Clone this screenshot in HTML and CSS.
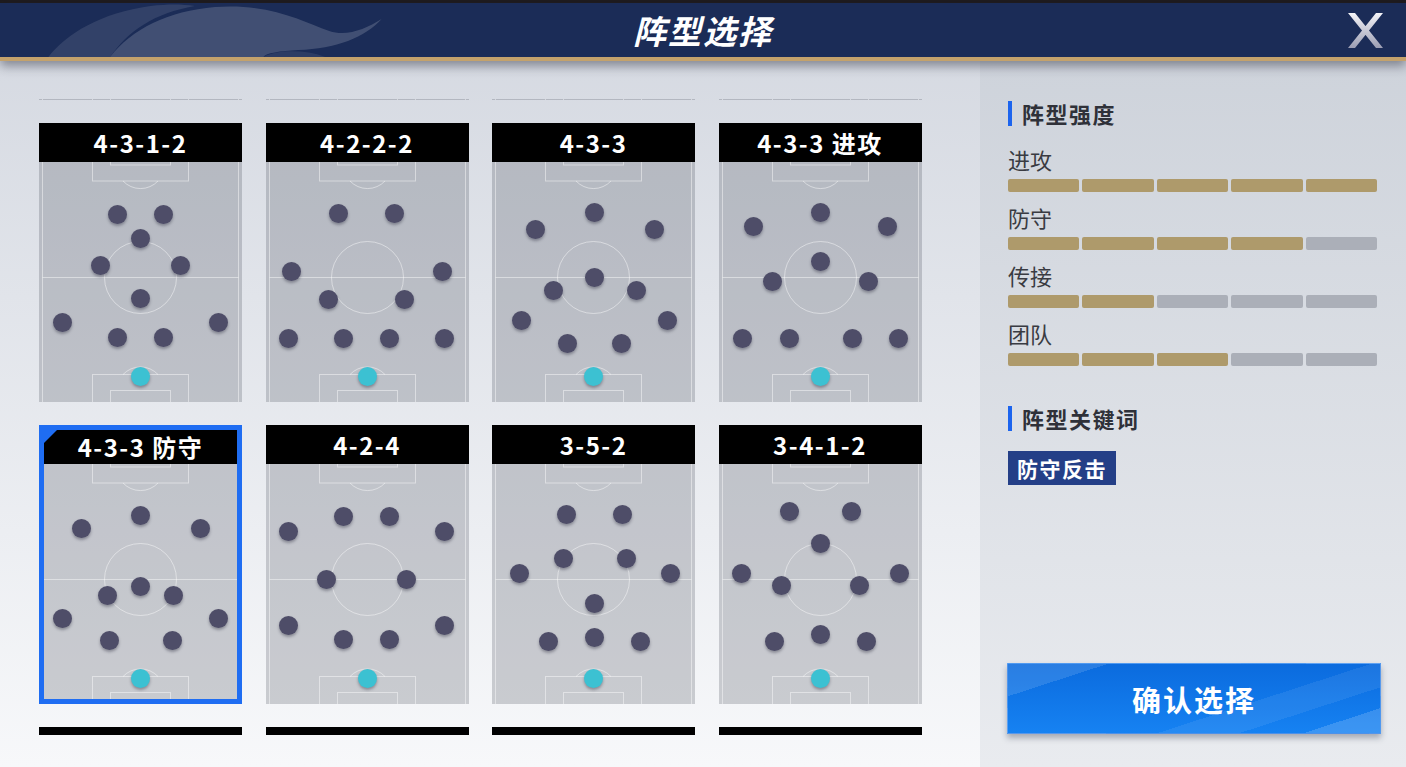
FILE: index.html
```html
<!DOCTYPE html>
<html lang="zh-CN">
<head>
<meta charset="UTF-8" />
<meta name="viewport" content="width=device-width, initial-scale=1" />
<title>阵型选择</title>
<link rel="stylesheet" href="styles.css">
</head>
<body>

<div class="backdrop"></div>

<header class="topbar">
  <svg class="topbar-wave" width="430" height="54" viewBox="0 0 320 54" preserveAspectRatio="none">
    <path d="M36 54 C50 30 75 10 112 3 C125 1 135 1 145 3 C115 10 95 28 82 54 Z" fill="rgba(255,255,255,.10)"/>
    <path d="M82 54 C98 26 125 8 160 4 C200 0 225 18 245 28 C258 34 272 26 284 16 C272 34 250 46 222 47 C208 48 198 50 196 54 Z" fill="rgba(255,255,255,.17)"/>
    <path d="M196 54 C206 47 226 46 242 54 Z" fill="rgba(255,255,255,.08)"/>
  </svg>
  <span></span>
  <h1>阵型选择</h1>
  <button class="close-btn" aria-label="关闭">
    <svg width="35" height="35" viewBox="0 0 35 35">
      <defs>
        <linearGradient id="silver" x1="0" y1="0" x2="0" y2="1">
          <stop offset="0" stop-color="#f4f4f8"/>
          <stop offset="1" stop-color="#9c9eb3"/>
        </linearGradient>
      </defs>
      <path d="M0 0 H7 L35 35 H28 Z M28 0 H35 L7 35 H0 Z" fill="url(#silver)"/>
    </svg>
  </button>
</header>

<main class="layout">
  <section class="formations">
    <div class="viewport">
      <div class="grid" id="grid"></div>
    </div>
  </section>

  <aside class="details">
    <h2 class="section-title">阵型强度</h2>
    <div class="stats">
      <div class="stat">
        <div class="stat-label">进攻</div>
        <div class="stat-bar"><span class="on"></span><span class="on"></span><span class="on"></span><span class="on"></span><span class="on"></span></div>
      </div>
      <div class="stat">
        <div class="stat-label">防守</div>
        <div class="stat-bar"><span class="on"></span><span class="on"></span><span class="on"></span><span class="on"></span><span></span></div>
      </div>
      <div class="stat">
        <div class="stat-label">传接</div>
        <div class="stat-bar"><span class="on"></span><span class="on"></span><span></span><span></span><span></span></div>
      </div>
      <div class="stat">
        <div class="stat-label">团队</div>
        <div class="stat-bar"><span class="on"></span><span class="on"></span><span class="on"></span><span></span><span></span></div>
      </div>
    </div>

    <h2 class="section-title keywords-title">阵型关键词</h2>
    <div class="tags"><span class="tag">防守反击</span></div>

    <button class="confirm-btn">确认选择</button>
  </aside>
</main>

<script>
  const PITCH = `<svg width="203" height="240" viewBox="0 0 203 240" fill="none" stroke="rgba(255,255,255,.45)" stroke-width="1">
    <line x1="3.5" y1="0" x2="3.5" y2="240"/>
    <line x1="199.5" y1="0" x2="199.5" y2="240"/>
    <line x1="3.5" y1="115.5" x2="199.5" y2="115.5"/>
    <circle cx="101.5" cy="115.5" r="36"/>
    <rect x="53.5" y="-1" width="96" height="20"/>
    <rect x="71.5" y="-1" width="60" height="4"/>
    <path d="M84 19 A24 24 0 0 0 119 19"/>
    <rect x="53.5" y="212.5" width="96" height="30"/>
    <rect x="71.5" y="228.5" width="60" height="14"/>
    <path d="M84 212.5 A24 24 0 0 1 119 212.5"/>
  </svg>`;

  // rows scrolled out of view are only stubs (no label shown)
  const formations = [
    { stub: true }, { stub: true }, { stub: true }, { stub: true },

    { name: '4-3-1-2', dots: [[78,52],[124,52],[101,76],[61,103],[141,103],[101,136],[23,160],[179,160],[78,175],[124,175]] },
    { name: '4-2-2-2', dots: [[73,51],[129,51],[26,109],[177,109],[63,137],[139,137],[23,176],[78,176],[124,176],[179,176]] },
    { name: '4-3-3', dots: [[102,50],[43,67],[162,67],[102,115],[61,128],[144,128],[29,158],[175,158],[75,181],[129,181]] },
    { name: '4-3-3 进攻', dots: [[102,50],[35,64],[169,64],[102,99],[54,119],[150,119],[24,176],[71,176],[134,176],[180,176]] },

    { name: '4-3-3 防守', selected: true, dots: [[101,51],[42,64],[161,64],[101,122],[68,131],[134,131],[23,154],[179,154],[70,176],[133,176]] },
    { name: '4-2-4', dots: [[23,67],[78,52],[124,52],[179,67],[61,115],[141,115],[23,161],[78,175],[124,175],[179,161]] },
    { name: '3-5-2', dots: [[74,50],[130,50],[71,94],[134,94],[27,109],[178,109],[102,139],[56,177],[102,173],[148,177]] },
    { name: '3-4-1-2', dots: [[71,47],[133,47],[102,79],[23,109],[181,109],[63,121],[141,121],[56,177],[102,170],[148,177]] },

    { stub: true }, { stub: true }, { stub: true }, { stub: true }
  ];

  const grid = document.getElementById('grid');
  formations.forEach(f => {
    const card = document.createElement('div');
    card.className = 'card' + (f.selected ? ' selected' : '');
    const dots = (f.dots || []).map(([x, y]) => `<span class="dot" style="left:${x}px;top:${y}px"></span>`).join('');
    const gk = f.stub ? '' : '<span class="dot gk" style="left:101.5px;top:214.5px"></span>';
    card.innerHTML = `<div class="card-title">${f.name || ''}</div>
      <div class="pitch">${PITCH}${dots}${gk}</div>`;
    grid.appendChild(card);
  });
</script>

</body>
</html>
```

FILE: styles.css
```css
body {
  margin: 0;
  width: 1406px;
  height: 767px;
  overflow: hidden;
  background: #16171c;
  font-family: "Noto Sans CJK SC", "Noto Sans", sans-serif;
}

.backdrop {
  height: 3px;
  background: #1e1b1e;
}

/* header */
.topbar {
  position: relative;
  z-index: 2;
  height: 54px;
  background: #1b2c57;
  border-bottom: 4px solid #c4a26c;
  box-shadow: 0 5px 10px rgba(30, 34, 48, .45);
  display: grid;
  grid-template-columns: 1fr auto 1fr;
  align-items: center;
}
.topbar-wave {
  position: absolute;
  left: 0;
  top: 0;
}
.topbar h1 {
  margin: 0;
  position: relative;
  color: #fff;
  font-size: 33px;
  font-weight: 700;
  font-style: italic;
  letter-spacing: 2px;
  line-height: 1;
}
.close-btn {
  justify-self: end;
  margin-right: 23px;
  width: 35px;
  height: 35px;
  padding: 0;
  border: 0;
  background: none;
  cursor: pointer;
}
.close-btn svg {
  display: block;
}

/* layout */
.layout {
  display: flex;
  height: 706px;
}

.formations {
  width: 980px;
  box-sizing: border-box;
  padding: 38px 0 0 39px;
  background: linear-gradient(#d6dae2, #f7f8fa);
}
.viewport {
  height: 636px;
  overflow: hidden;
}
.grid {
  display: grid;
  grid-template-columns: repeat(4, 203px);
  column-gap: 23.5px;
  row-gap: 23px;
  margin-top: -278px;
}

.card {
  position: relative;
}
.card-title {
  position: relative;
  height: 39px;
  background: #000;
  color: #fff;
  font-size: 24px;
  font-weight: 700;
  line-height: 39px;
  text-align: center;
  letter-spacing: 1.5px;
}
.pitch {
  position: relative;
  height: 240px;
  background: rgba(50, 54, 70, .22);
}
.pitch svg {
  position: absolute;
  left: 0;
  top: 0;
}
.dot {
  position: absolute;
  width: 19px;
  height: 19px;
  margin: -9.5px 0 0 -9.5px;
  border-radius: 50%;
  background: #4e4d68;
  box-shadow: 0 2px 3px rgba(20, 20, 40, .35);
}
.dot.gk {
  background: #3cc1d2;
}

.card.selected::after {
  content: "";
  position: absolute;
  inset: 0;
  border: 5px solid #1f6df2;
}
.card.selected .card-title {
  box-sizing: border-box;
  padding-top: 5px;
  line-height: 34px;
}
.card.selected .card-title::before {
  content: "";
  position: absolute;
  left: 5px;
  top: 5px;
  border-top: 13px solid #1f6df2;
  border-right: 13px solid transparent;
}

/* right panel */
.details {
  flex: 1;
  display: flex;
  flex-direction: column;
  align-items: flex-start;
  padding: 40px 0 0 28px;
  background: linear-gradient(#ced3db, #e9ebef);
}
.section-title {
  margin: 0;
  padding-left: 10px;
  border-left: 4px solid #1c64ee;
  color: #2f3139;
  font-size: 22px;
  font-weight: 700;
  line-height: 25px;
  letter-spacing: 1.5px;
}
.stats {
  margin-top: 21px;
  display: flex;
  flex-direction: column;
  gap: 13px;
}
.stat-label {
  color: #393b42;
  font-size: 22px;
  line-height: 25px;
}
.stat-bar {
  margin-top: 7px;
  width: 369px;
  display: flex;
  gap: 3px;
}
.stat-bar span {
  flex: 1;
  height: 13px;
  border-radius: 2px;
  background: #abafb8;
}
.stat-bar span.on {
  background: #ae9a6b;
}

.keywords-title {
  margin-top: 40px;
}
.tags {
  margin-top: 20px;
}
.tag {
  display: inline-block;
  height: 34px;
  padding: 0 9px;
  background: #243f87;
  color: #fff;
  font-size: 21px;
  font-weight: 700;
  line-height: 34px;
  letter-spacing: 1.5px;
}

.confirm-btn {
  margin: auto 0 33px -1px;
  width: 374px;
  height: 71px;
  border: 1px solid rgba(120, 170, 240, .6);
  color: #fff;
  font-family: inherit;
  font-size: 29px;
  font-weight: 700;
  letter-spacing: 2px;
  cursor: pointer;
  background:
    linear-gradient(-18deg, rgba(255, 255, 255, .16) 0 13%, transparent 13%),
    linear-gradient(-18deg, transparent 0 24%, rgba(255, 255, 255, .07) 24% 38%, transparent 38%),
    linear-gradient(162deg, rgba(255, 255, 255, .12) 0 17%, transparent 17%),
    linear-gradient(#0b6bde, #1682f2);
  box-shadow: 0 4px 6px rgba(40, 50, 70, .35);
}
```
